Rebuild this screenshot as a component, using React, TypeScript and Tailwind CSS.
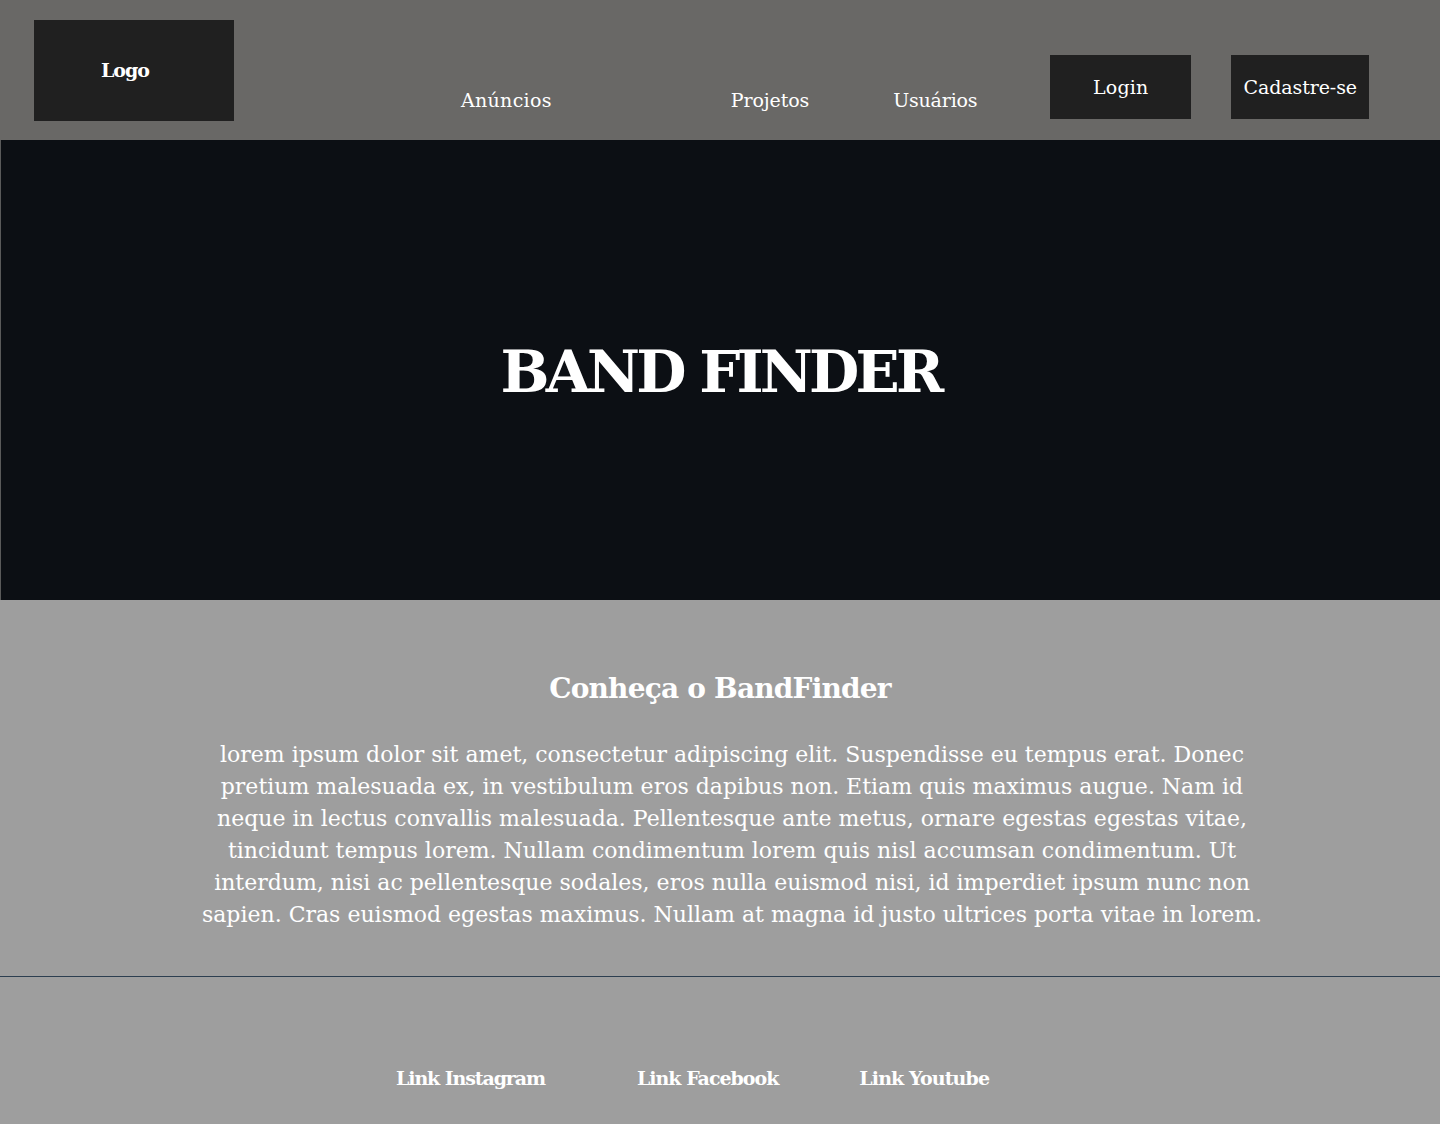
import React from "react";

const slab = { fontFamily: '"DejaVu Serif", "Liberation Serif", serif' };

export default function App() {
  const lines = [
    "lorem ipsum dolor sit amet, consectetur adipiscing elit. Suspendisse eu tempus erat. Donec",
    "pretium malesuada ex, in vestibulum eros dapibus non. Etiam quis maximus augue. Nam id",
    "neque in lectus convallis malesuada. Pellentesque ante metus, ornare egestas egestas vitae,",
    "tincidunt tempus lorem. Nullam condimentum lorem quis nisl accumsan condimentum. Ut",
    "interdum, nisi ac pellentesque sodales, eros nulla euismod nisi, id imperdiet ipsum nunc non",
    "sapien. Cras euismod egestas maximus. Nullam at magna id justo ultrices porta vitae in lorem.",
  ];
  return (
    <div style={slab} className="w-[1440px] min-h-[1124px] bg-[#9e9e9e] text-white">
      <header className="h-[140px] bg-[#696866] flex items-start">
        <div className="ml-[34px] mt-[20px] w-[200px] h-[101px] bg-[#202020] flex items-center justify-center">
          <span className="text-[19px] font-bold tracking-[-1px] pr-[18px]">Logo</span>
        </div>
        <nav className="flex items-start">
          <a className="ml-[227px] mt-[86px] text-[19px] tracking-[0.3px]">Anúncios</a>
          <a className="ml-[179px] mt-[86px] text-[19px] tracking-[-0.1px]">Projetos</a>
          <a className="ml-[84px] mt-[86px] text-[19px] tracking-[-0.2px]">Usuários</a>
          <button className="ml-[73px] mt-[55px] w-[141px] h-[64px] bg-[#202020] text-[19px] tracking-[0.2px] flex items-center justify-center">
            Login
          </button>
          <button className="ml-[40px] mt-[55px] w-[138px] h-[64px] bg-[#202020] text-[19px] tracking-[-0.1px] flex items-center justify-center">
            Cadastre-se
          </button>
        </nav>
      </header>

      <section className="h-[460px] bg-[#0c0f14] border-l border-[#5a5a5a] flex items-center justify-center">
        <h1 className="text-[58px] font-bold tracking-[-3.8px] leading-none mt-[4px]">BAND FINDER</h1>
      </section>

      <section className="h-[376px] flex flex-col items-center pt-[72px]">
        <h2 className="text-[28px] font-bold tracking-[-0.8px] leading-[34px]">Conheça o BandFinder</h2>
        <p className="mt-[33px] ml-[24px] text-center text-[22px] tracking-[0px] leading-[32px]">
          {lines.map((l, i) => (
            <React.Fragment key={i}>
              {l}
              {i < lines.length - 1 && <br />}
            </React.Fragment>
          ))}
        </p>
      </section>

      <div className="h-px bg-[#2c3e50]" />

      <footer className="h-[147px] flex items-start">
        <a className="ml-[396px] mt-[87px] text-[19px] font-bold tracking-[-1.1px]">Link Instagram</a>
        <a className="ml-[92px] mt-[87px] text-[19px] font-bold tracking-[-1px]">Link Facebook</a>
        <a className="ml-[81px] mt-[87px] text-[19px] font-bold tracking-[-0.9px]">Link Youtube</a>
      </footer>
    </div>
  );
}
